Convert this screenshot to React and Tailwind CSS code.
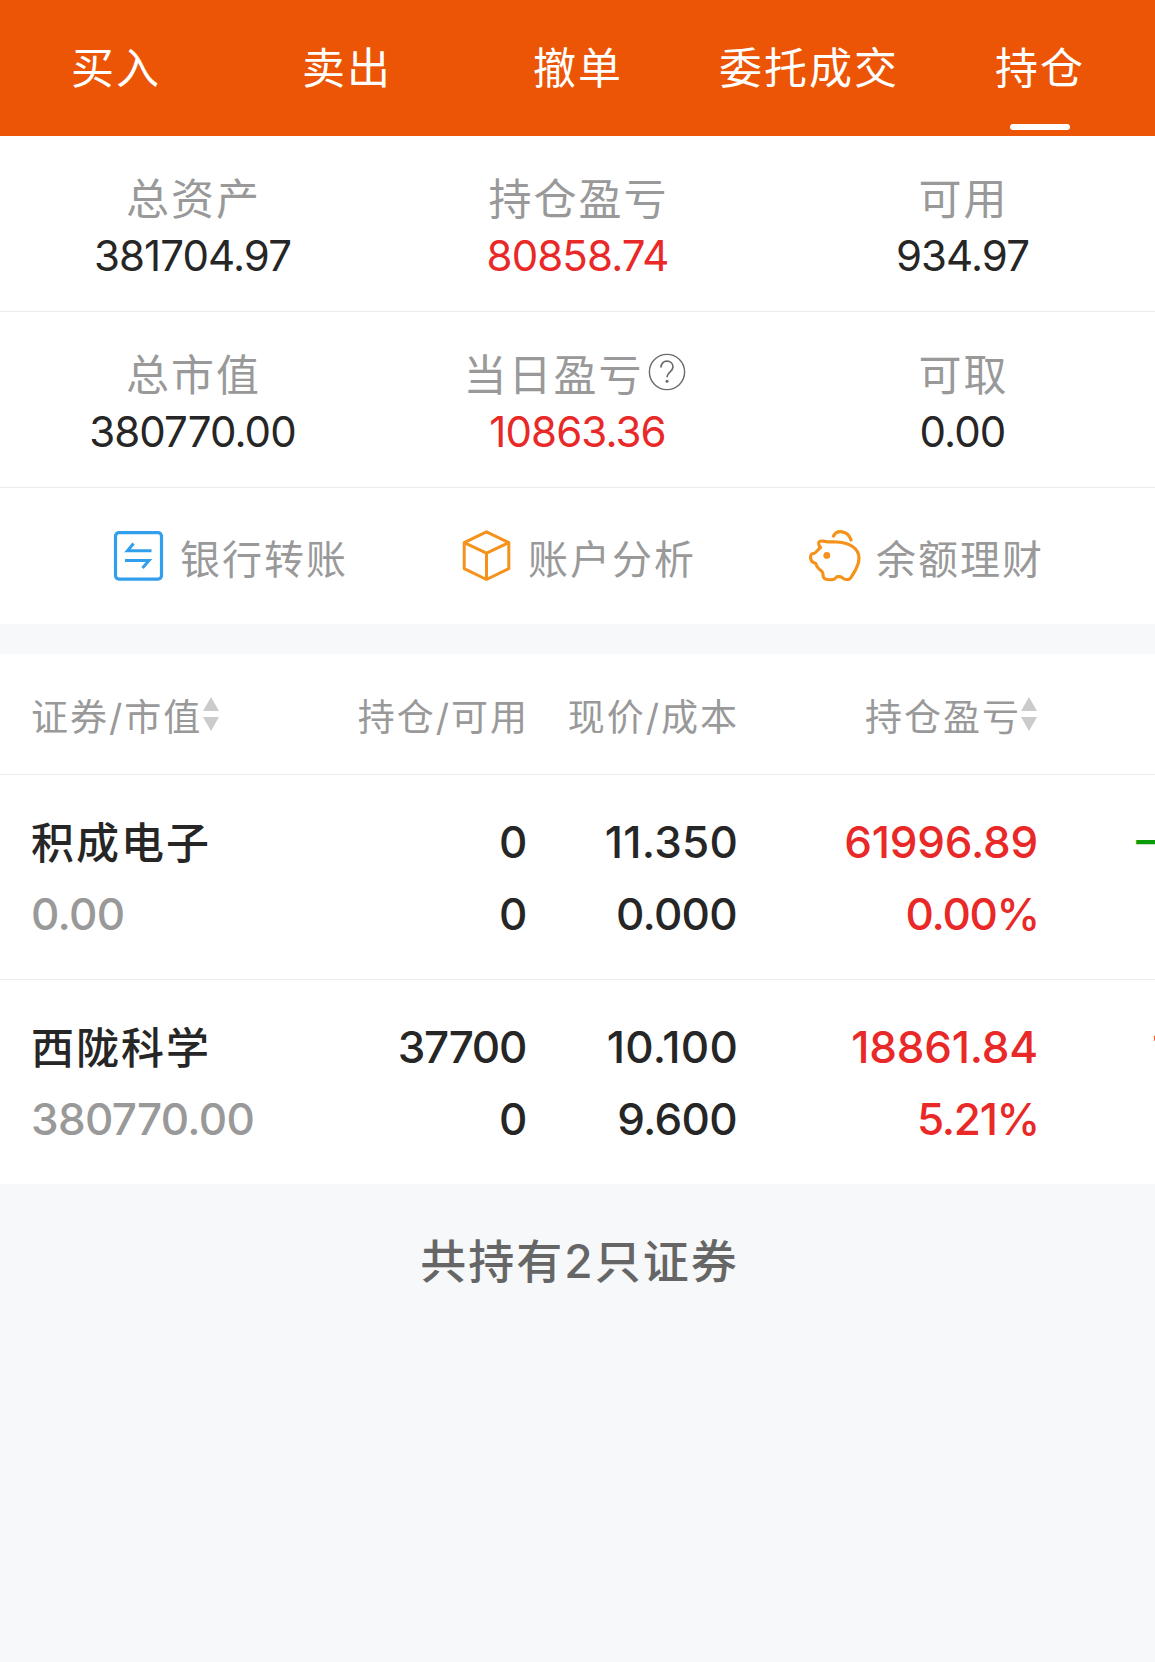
import clsx from "clsx";

// Top tabs
const tabs = ["买入", "卖出", "撤单", "委托成交", "持仓"];

// Account summary, two rows of three
const summary = [
  [
    { label: "总资产", value: "381704.97" },
    { label: "持仓盈亏", value: "80858.74", up: true },
    { label: "可用", value: "934.97" },
  ],
  [
    { label: "总市值", value: "380770.00" },
    { label: "当日盈亏", value: "10863.36", up: true, help: true },
    { label: "可取", value: "0.00" },
  ],
];

const holdings = [
  {
    name: "积成电子",
    marketValue: "0.00",
    amount: "0",
    available: "0",
    price: "11.350",
    cost: "0.000",
    profit: "61996.89",
    rate: "0.00%",
    today: "−7998.48",
  },
  {
    name: "西陇科学",
    marketValue: "380770.00",
    amount: "37700",
    available: "0",
    price: "10.100",
    cost: "9.600",
    profit: "18861.84",
    rate: "5.21%",
    today: "18861.84",
  },
];

const HelpIcon = () => (
  <svg
    viewBox="0 0 38 38"
    className="w-[38px] h-[38px] ml-[4px] mr-[8px] -mt-[7px]"
    fill="none"
    stroke="#6b6b6b"
    strokeWidth="1.4"
  >
    <circle cx="19" cy="19" r="17.6" />
    <path d="M13 14.5c0-4 2.600-6.300 6-6.300s6 2.300 6 5.600c0 5-6 5.200-6 10.500" strokeWidth="1.7" />
    <circle cx="19" cy="28.300" r="1.500" fill="#6b6b6b" stroke="none" />
  </svg>
);

const TransferIcon = () => (
  <svg viewBox="0 0 52 52" className="w-[52px] h-[52px]" fill="none" stroke="#319fec">
    <rect x="2.500" y="2.700" width="46" height="46.400" rx="3.500" strokeWidth="3.200" />
    <path d="M38.500 20.700H14.500L20.500 13.500M12 30.500H36L29.500 38" strokeWidth="3" />
  </svg>
);

const CubeIcon = () => (
  <svg
    viewBox="0 0 52 52"
    className="w-[52px] h-[52px]"
    fill="none"
    stroke="#f5921b"
    strokeWidth="3"
    strokeLinejoin="round"
  >
    <path d="M25.500 1.800L47.800 12.600V38.700L25.500 49.500L3.200 38.700V12.600Z" />
    <path d="M3.200 12.600L25.500 23.100L47.800 12.600M25.500 23.100V49.500" />
  </svg>
);

const PiggyIcon = () => (
  <svg
    viewBox="0 0 52 52"
    className="w-[52px] h-[52px]"
    fill="none"
    stroke="#f5921b"
    strokeWidth="3.200"
    strokeLinecap="round"
    strokeLinejoin="round"
  >
    <path d="M11.500 17.500C9.800 16 9 12.500 10.500 11.500C12 10.300 14.500 11.200 17.500 11.700C21 12.200 24 11.700 28 12C41 12.800 50 18.500 50 28C50 34.500 46.500 40.500 43.500 45C41.500 48.500 40.500 49.700 37.500 49.500C33.500 49.500 33.500 46.700 31 46.700H28.500C26.500 46.700 27 49.500 23.500 49.700C19 50 14.800 49.500 14.200 46.500C13.700 44 14.500 42.500 12.500 41C9.500 38.800 7.500 36.500 7 34C6.500 32 2 34 1.600 28C1.400 24 2.500 23.500 5 23.300C7 23 8.500 20 11.500 17.500Z" />
    <path d="M24.500 6C27.500 0 38.500 -0.500 42 10" />
    <circle cx="17.800" cy="25.400" r="3.400" fill="#f5921b" stroke="none" />
  </svg>
);

const SortIcon = () => (
  <svg viewBox="0 0 16 34" className="w-[16px] h-[34px]" fill="#cbcbcb">
    <path d="M8 0L16 14H0ZM0 20H16L8 34Z" />
  </svg>
);

const actions = [
  { label: "银行转账", icon: <TransferIcon /> },
  { label: "账户分析", icon: <CubeIcon /> },
  { label: "余额理财", icon: <PiggyIcon /> },
];

const columns = "grid grid-cols-[296px_232px_211px_299px_1fr]";

const SummaryCell = ({ label, value, up, help }) => (
  <div className="flex flex-col items-center">
    <div className="flex items-center h-[60px] pt-[2px] pl-[2px] text-[43px] leading-[60px] tracking-[2px] text-[#999]">
      {label}
      {help && <HelpIcon />}
    </div>
    <div
      className={clsx(
        "pt-px text-[42px] leading-[54px] tracking-[-0.9px]",
        up ? "text-[#e92828]" : "text-[#262626]"
      )}
    >
      {value}
    </div>
  </div>
);

const HoldingRow = ({ item }) => (
  <div
    className={`${columns} h-[205px] pt-[31px] pl-[31px] border-b border-[#ebebeb] last:border-b-0 last:h-[204px] text-[44px] leading-[72px] font-medium tracking-[-0.7px] text-[#262626] text-right overflow-hidden`}
  >
    <div className="text-left">
      <div className="h-[72px] pt-px text-[43px] tracking-[2px]">{item.name}</div>
      <div className="text-[#999]">{item.marketValue}</div>
    </div>
    <div className="-ml-[30px] pr-[33px] tracking-[-1.3px]">
      <div>{item.amount}</div>
      <div>{item.available}</div>
    </div>
    <div className="-ml-[30px] pr-[32px]">
      <div className="tracking-[0.2px]">{item.price}</div>
      <div className="pr-px">{item.cost}</div>
    </div>
    <div className="-ml-[30px] pr-[30px] text-[#e92828]">
      <div className="pr-px tracking-[-0.2px]">{item.profit}</div>
      <div className="tracking-[-1.3px]">{item.rate}</div>
    </div>
    {/* Today's profit runs past the right edge of the screen */}
    <div
      className={clsx(
        "flex justify-end w-[271px] tracking-[-0.1px]",
        item.today.startsWith("−") ? "-mt-[3px] pr-[4px] text-[#0a9c0a]" : "text-[#e92828]"
      )}
    >
      {item.today}
    </div>
  </div>
);

const App = () => {
  return (
    <div className="w-full min-h-screen overflow-hidden bg-[#f7f8fa] font-[Inter,'Noto_Sans_CJK_SC',sans-serif]">
      {/* Tabs */}
      <nav className="grid grid-cols-5 h-[136px] bg-[#eb5505] text-white text-[43px] tracking-[2px]">
        {tabs.map((tab, index) => (
          <div key={tab} className="flex flex-col items-center justify-between pt-[35px] pb-[6px]">
            <span className="pl-[1px] leading-[66px] whitespace-nowrap">{tab}</span>
            {index === tabs.length - 1 && (
              <span className="w-[60px] h-[6px] rounded-[3px] bg-white" />
            )}
          </div>
        ))}
      </nav>

      {/* Summary */}
      <section className="bg-white">
        {summary.map((row, index) => (
          <div key={index} className="grid grid-cols-3 h-[176px] pt-[32px] border-b border-[#ebebeb]">
            {row.map((cell) => (
              <SummaryCell key={cell.label} {...cell} />
            ))}
          </div>
        ))}

        {/* Quick actions */}
        <div className="flex justify-center gap-[113px] h-[136px] pt-[42px] pl-[2px]">
          {actions.map(({ label, icon }) => (
            <div key={label} className="flex items-start gap-[15px]">
              {icon}
              <span className="pt-[2px] text-[40px] leading-[56px] tracking-[2px] text-[#999]">
                {label}
              </span>
            </div>
          ))}
        </div>
      </section>

      {/* Holdings */}
      <section className="mt-[30px] bg-white">
        <div
          className={`${columns} h-[121px] pl-[31px] border-b border-[#ebebeb] text-[37px] tracking-[2px] text-[#999]`}
        >
          <div className="flex items-center gap-px">
            <span className="pt-[8px]">证券/市值</span>
            <SortIcon />
          </div>
          <div className="-ml-[30px] pr-[30px] pt-[8px] flex items-center justify-end">持仓/可用</div>
          <div className="-ml-[30px] pr-[31px] pt-[8px] flex items-center justify-end">现价/成本</div>
          <div className="-ml-[30px] pr-[32px] flex items-center justify-end">
            <span className="pt-[8px]">持仓盈亏</span>
            <SortIcon />
          </div>
        </div>
        <div>
          {holdings.map((item) => (
            <HoldingRow key={item.name} item={item} />
          ))}
        </div>
      </section>

      <p className="pt-[41px] pl-[4px] text-center text-[46px] leading-[72px] font-medium tracking-[2px] text-[#666]">
        共持有2只证券
      </p>
    </div>
  );
};

export default App;
